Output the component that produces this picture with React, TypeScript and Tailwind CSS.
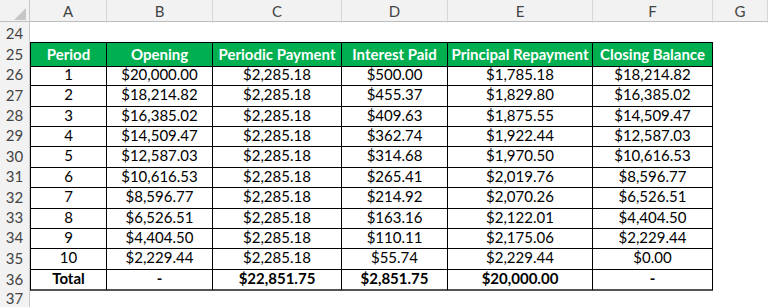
const cols = ["A", "B", "C", "D", "E", "F", "G"];

const heads = ["Period", "Opening", "Periodic Payment", "Interest Paid", "Principal Repayment", "Closing Balance"];

const rows = [
  ["1", "$20,000.00", "$2,285.18", "$500.00", "$1,785.18", "$18,214.82"],
  ["2", "$18,214.82", "$2,285.18", "$455.37", "$1,829.80", "$16,385.02"],
  ["3", "$16,385.02", "$2,285.18", "$409.63", "$1,875.55", "$14,509.47"],
  ["4", "$14,509.47", "$2,285.18", "$362.74", "$1,922.44", "$12,587.03"],
  ["5", "$12,587.03", "$2,285.18", "$314.68", "$1,970.50", "$10,616.53"],
  ["6", "$10,616.53", "$2,285.18", "$265.41", "$2,019.76", "$8,596.77"],
  ["7", "$8,596.77", "$2,285.18", "$214.92", "$2,070.26", "$6,526.51"],
  ["8", "$6,526.51", "$2,285.18", "$163.16", "$2,122.01", "$4,404.50"],
  ["9", "$4,404.50", "$2,285.18", "$110.11", "$2,175.06", "$2,229.44"],
  ["10", "$2,229.44", "$2,285.18", "$55.74", "$2,229.44", "$0.00"],
];

const total = ["Total", "-", "$22,851.75", "$2,851.75", "$20,000.00", "-"];

const grid = "grid grid-cols-[30px_77px_106px_129px_106px_145px_120px_55px]";

const RowNum = ({ n }: { n: number }) => (
  <div className="flex items-center justify-center bg-[#f2f2f2] border-r border-[#c8c8c8] text-[#444] text-[15px]">
    {n}
  </div>
);

const Line = ({
  n,
  cells,
  kind,
}: {
  n: number;
  cells?: string[];
  kind?: "head" | "body" | "total";
}) => (
  <div className={`${grid} h-[20.4px]`}>
    <RowNum n={n} />
    {cells ? (
      cells.map((c, i) => (
        <div
          key={i}
          className={`flex items-center justify-center border-r border-b border-black text-[15px] whitespace-nowrap ${
            i === 0 ? "border-l" : ""
          } ${kind === "head" ? "bg-[#00b050] text-white font-bold border-t" : "text-black"} ${
            kind === "total" ? "font-bold border-b-2 border-b-[#555]" : ""
          }`}
        >
          {c}
        </div>
      ))
    ) : (
      <div className="col-span-7" />
    )}
    {cells && <div />}
  </div>
);

export default function App() {
  return (
    <div className="w-[768px] h-[307px] overflow-hidden bg-white font-['Lato',sans-serif]">
      <div className={`${grid} h-[22px] bg-[#f2f2f2] border-b border-[#bdbdbd] text-[#444] text-[15px]`}>
        <div className="relative border-r border-[#c8c8c8]">
          <div className="absolute right-[3px] bottom-[3px] w-0 h-0 border-l-[12px] border-l-transparent border-b-[12px] border-b-[#c6c6c6]" />
        </div>
        {cols.map((c) => (
          <div key={c} className="flex items-center justify-center border-r border-[#d6d6d6]">
            {c}
          </div>
        ))}
      </div>
      <Line n={24} />
      <Line n={25} cells={heads} kind="head" />
      {rows.map((r, i) => (
        <Line key={i} n={26 + i} cells={r} kind="body" />
      ))}
      <Line n={36} cells={total} kind="total" />
      <Line n={37} />
    </div>
  );
}
